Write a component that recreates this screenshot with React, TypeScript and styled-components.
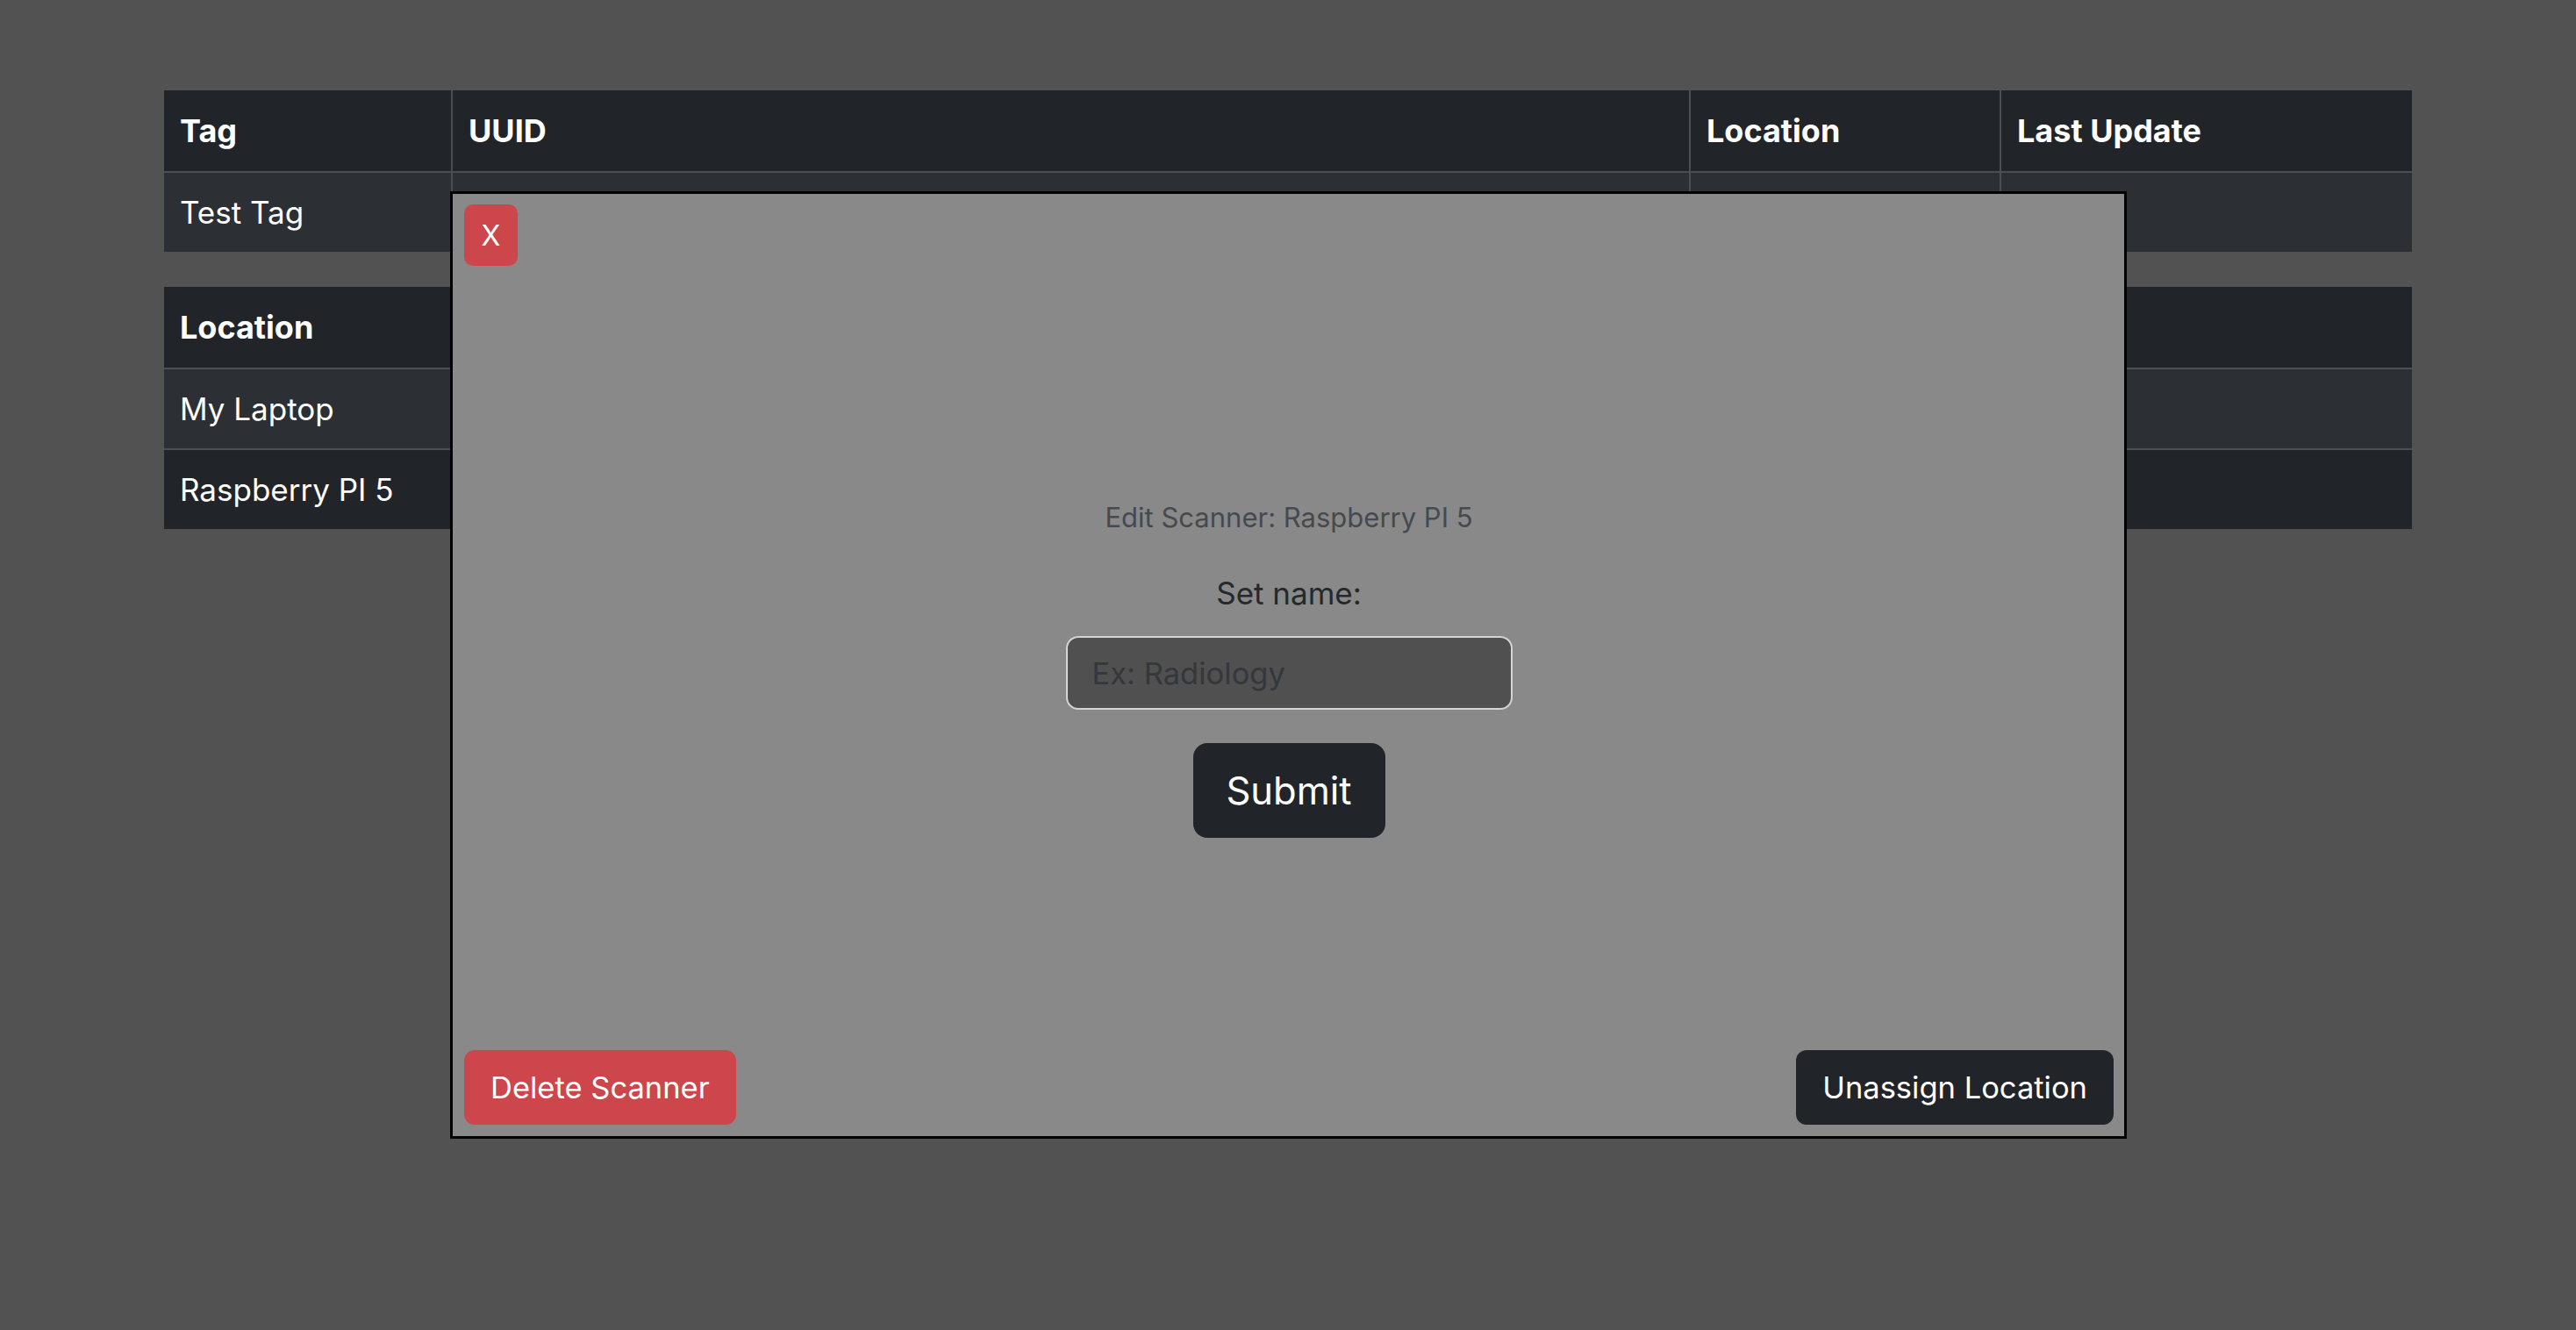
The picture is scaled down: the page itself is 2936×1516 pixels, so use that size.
import React from "react";
import styled, { createGlobalStyle } from "styled-components";

const GlobalStyle = createGlobalStyle`
  html, body {
    margin: 0;
    padding: 0;
    background: #525252;
  }
  body {
    font-family: Inter, "Noto Sans", "Liberation Sans", sans-serif;
  }
  *, *::before, *::after {
    box-sizing: border-box;
  }
`;

const Page = styled.main`
  min-height: 1516px;
  padding: 103px 187px 0;
  display: flex;
  flex-direction: column;
  gap: 40px;
`;

const Table = styled.div<{ $cols: string }>`
  display: grid;
  grid-template-columns: ${(p) => p.$cols};
`;

const Cell = styled.div<{ $head?: boolean; $stripe?: boolean; $first?: boolean; $divided?: boolean }>`
  height: 92px;
  display: flex;
  align-items: center;
  padding: 0 18px;
  background: ${(p) => (p.$stripe ? "#2c3034" : "#212529")};
  color: #ffffff;
  font-size: ${(p) => (p.$head ? "36px" : "35px")};
  font-weight: ${(p) => (p.$head ? 700 : 400)};
  border-left: ${(p) => (p.$first ? "none" : "2px solid #4a4f53")};
  border-top: ${(p) => (p.$divided ? "2px solid #4a4f53" : "none")};
  white-space: nowrap;
  overflow: hidden;
`;

const Overlay = styled.div`
  position: fixed;
  left: calc(50% - 955px);
  top: calc(50% - 540px);
  width: 1911px;
  height: 1080px;
  background: #898989;
  border: 3px solid #000000;
  display: flex;
  flex-direction: column;
  padding: 12px 12px 13px 13px;
`;

const TopRow = styled.div`
  display: flex;
  justify-content: flex-start;
`;

const BaseButton = styled.button<{ $variant: "danger" | "dark" }>`
  border: none;
  color: #ffffff;
  font-family: Inter, "Noto Sans", "Liberation Sans", sans-serif;
  background: ${(p) => (p.$variant === "danger" ? "#cc464c" : "#212529")};
  cursor: pointer;
  display: inline-flex;
  align-items: center;
  justify-content: center;
`;

const CloseButton = styled(BaseButton)`
  width: 61px;
  height: 70px;
  font-size: 32px;
  border-radius: 10px;
  padding: 0;
`;

const FooterButton = styled(BaseButton)`
  height: 85px;
  padding: 0 30px;
  font-size: 34.5px;
  border-radius: 12px;
`;

const SubmitButton = styled(BaseButton)`
  width: 219px;
  height: 108px;
  margin-top: 38px;
  font-size: 43.5px;
  border-radius: 16px;
  padding: 0;
`;

const Middle = styled.div`
  flex: 1;
  display: flex;
  flex-direction: column;
  align-items: center;
  justify-content: center;
  padding-top: 27px;
`;

const Title = styled.p`
  margin: 0;
  font-size: 31px;
  line-height: 36px;
  color: #46494d;
`;

const Label = styled.label`
  margin-top: 47px;
  font-size: 35px;
  line-height: 42px;
  color: #25282c;
`;

const NameInput = styled.input`
  margin-top: 28px;
  width: 509px;
  height: 84px;
  background: #505050;
  border: 2px solid #d4d4d4;
  border-radius: 14px;
  padding: 0 28px;
  font-family: Inter, "Noto Sans", "Liberation Sans", sans-serif;
  font-size: 34.5px;
  color: #ffffff;
  outline: none;
  &::placeholder {
    color: #34373b;
  }
`;

const BottomRow = styled.div`
  display: flex;
  justify-content: space-between;
  align-items: flex-end;
`;

export default function App() {
  return (
    <>
      <GlobalStyle />
      <Page>
        <Table $cols="327px 1411px 354px 1fr">
          <Cell $head $first>Tag</Cell>
          <Cell $head>UUID</Cell>
          <Cell $head>Location</Cell>
          <Cell $head>Last Update</Cell>
          <Cell $first $stripe $divided>Test Tag</Cell>
          <Cell $stripe $divided></Cell>
          <Cell $stripe $divided></Cell>
          <Cell $stripe $divided></Cell>
        </Table>
        <Table $cols="327px 1fr">
          <Cell $head $first>Location</Cell>
          <Cell $head>UUID</Cell>
          <Cell $first $stripe $divided>My Laptop</Cell>
          <Cell $stripe $divided></Cell>
          <Cell $first $divided>Raspberry PI 5</Cell>
          <Cell $divided></Cell>
        </Table>
      </Page>
      <Overlay role="dialog">
        <TopRow>
          <CloseButton $variant="danger">X</CloseButton>
        </TopRow>
        <Middle>
          <Title>Edit Scanner: Raspberry PI 5</Title>
          <Label htmlFor="scanner-name">Set name:</Label>
          <NameInput id="scanner-name" placeholder="Ex: Radiology" />
          <SubmitButton $variant="dark">Submit</SubmitButton>
        </Middle>
        <BottomRow>
          <FooterButton $variant="danger">Delete Scanner</FooterButton>
          <FooterButton $variant="dark">Unassign Location</FooterButton>
        </BottomRow>
      </Overlay>
    </>
  );
}
